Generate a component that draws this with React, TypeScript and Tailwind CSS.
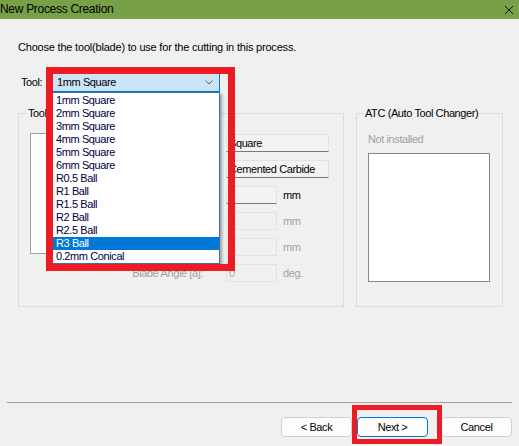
import React from "react"

const tools = [
  "1mm Square",
  "2mm Square",
  "3mm Square",
  "4mm Square",
  "5mm Square",
  "6mm Square",
  "R0.5 Ball",
  "R1 Ball",
  "R1.5 Ball",
  "R2 Ball",
  "R2.5 Ball",
  "R3 Ball",
  "0.2mm Conical",
]

interface Row {
  label: string
  value: string
  unit?: string
  wide?: boolean
  disabled?: boolean
}

const rows: Row[] = [
  { label: "Tool Type:", value: "Square", wide: true },
  { label: "Material:", value: "Cemented Carbide", wide: true },
  { label: "Diameter [d]:", value: "1", unit: "mm" },
  { label: "Radius [r]:", value: "0", unit: "mm", disabled: true },
  { label: "Tip Width [w]:", value: "0", unit: "mm", disabled: true },
  { label: "Blade Angle [a]:", value: "0", unit: "deg.", disabled: true },
]

function FieldRow({ row }: { row: Row }) {
  return (
    <div className="flex items-center h-[18px]">
      <span
        className={`w-[83px] shrink-0 mr-[23px] text-right whitespace-nowrap ${row.disabled ? "text-[#a0a0a0]" : "text-black"}`}
      >
        {row.label}
      </span>
      <div
        className={`h-[18px] shrink-0 flex items-center px-[2px] border ${row.wide ? "w-[103px]" : "w-[51px]"} ${
          row.disabled
            ? "border-[#e2e2e2] text-[#b0a8a0] bg-[#f0f0f0]"
            : "border-[#e2e2e2] border-b-[#7a7a7a] bg-[#f3f3f3] text-black"
        }`}
      >
        {row.value}
      </div>
      {row.unit && (
        <span className={`ml-[6px] ${row.disabled ? "text-[#a0a0a0]" : "text-black"}`}>{row.unit}</span>
      )}
    </div>
  )
}

export default function App() {
  const selected = "R3 Ball"

  return (
    <div className="relative w-[519px] h-[446px] overflow-hidden bg-[#f0f0f0] text-[11px] leading-[13px] tracking-[-0.4px] font-['Liberation_Sans','Arial',sans-serif] text-black">
      {/* title bar */}
      <div className="h-[19px] bg-[#78a048] flex items-center justify-between">
        <span className="text-[12px] tracking-[-0.3px]">New Process Creation</span>
        <svg width="10" height="10" viewBox="0 0 10 10" className="mr-[5px]">
          <path d="M1 1 L9 9 M9 1 L1 9" stroke="#111" strokeWidth="1" fill="none" />
        </svg>
      </div>

      <div className="pl-[18px] pr-[16px]">
        <p className="mt-[22px] tracking-[-0.2px]">Choose the tool(blade) to use for the cutting in this process.</p>

        <div className="mt-[18px] flex items-center h-[20px]">
          <span className="ml-[3px] w-[31px]">Tool:</span>
          <div className="w-[168px] h-[20px] bg-[#cce4f7] border border-[#0078d7] flex items-center justify-between pl-[4px] pr-[6px]">
            <span>1mm Square</span>
            <svg width="8" height="5" viewBox="0 0 8 5">
              <path d="M0.5 0.5 L4 4 L7.5 0.5" stroke="#606060" strokeWidth="1" fill="none" />
            </svg>
          </div>
        </div>

        <div className="mt-[21px] flex gap-[12px]">
          {/* Tool group */}
          <div className="relative w-[326px] h-[194px] border border-[#dcdcdc] flex">
            <span className="absolute -top-[7px] left-[8px] px-[1px] bg-[#f0f0f0]">Tool</span>
            <div className="shrink-0 ml-[11px] mt-[19px] w-[90px] h-[121px] bg-white border border-[#a0a0a0]" />
            <div className="pt-[20px] flex flex-col gap-[8px]">
              {rows.map((r) => (
                <FieldRow key={r.label} row={r} />
              ))}
            </div>
          </div>

          {/* ATC group */}
          <div className="relative w-[147px] h-[194px] border border-[#dcdcdc] pl-[11px] pt-[19px]">
            <span className="absolute -top-[7px] left-[7px] px-[1px] bg-[#f0f0f0]">ATC (Auto Tool Changer)</span>
            <p className="text-[#a0a0a0]">Not installed</p>
            <div className="mt-[7px] w-[122px] h-[129px] bg-white border border-[#828790]" />
          </div>
        </div>
      </div>

      <div className="mt-[95px] mx-[7px] h-px bg-[#a0a0a0]" />

      <div className="mt-[14px] pr-[7px] flex justify-end">
        <button className="w-[71px] h-[20px] rounded-[4px] bg-[#fdfdfd] border border-[#d0d0d0]">&lt; Back</button>
        <button className="ml-[5px] w-[71px] h-[20px] rounded-[4px] bg-[#fdfdfd] border border-[#0078d4]">Next &gt;</button>
        <button className="ml-[13px] w-[71px] h-[20px] rounded-[4px] bg-[#fdfdfd] border border-[#d0d0d0]">Cancel</button>
      </div>

      {/* open dropdown list */}
      <ul className="absolute left-[52px] top-[92px] w-[168px] h-[172px] bg-white border border-[#3f6fa3] shadow-[2px_2px_3px_rgba(0,0,0,0.35)] py-px">
        {tools.map((t) => (
          <li
            key={t}
            className={`h-[13px] pl-[3px] ${t === selected ? "bg-[#0078d7] text-white" : "text-[#000040]"}`}
          >
            {t}
          </li>
        ))}
      </ul>

      {/* red highlight marks */}
      <div className="absolute left-[46px] top-[67px] w-[189px] h-[204px] border-[7px] border-[#ed1c24]" />
      <div className="absolute left-[352px] top-[405px] w-[90px] h-[39px] border-[5px] border-[#ed1c24]" />
    </div>
  )
}
